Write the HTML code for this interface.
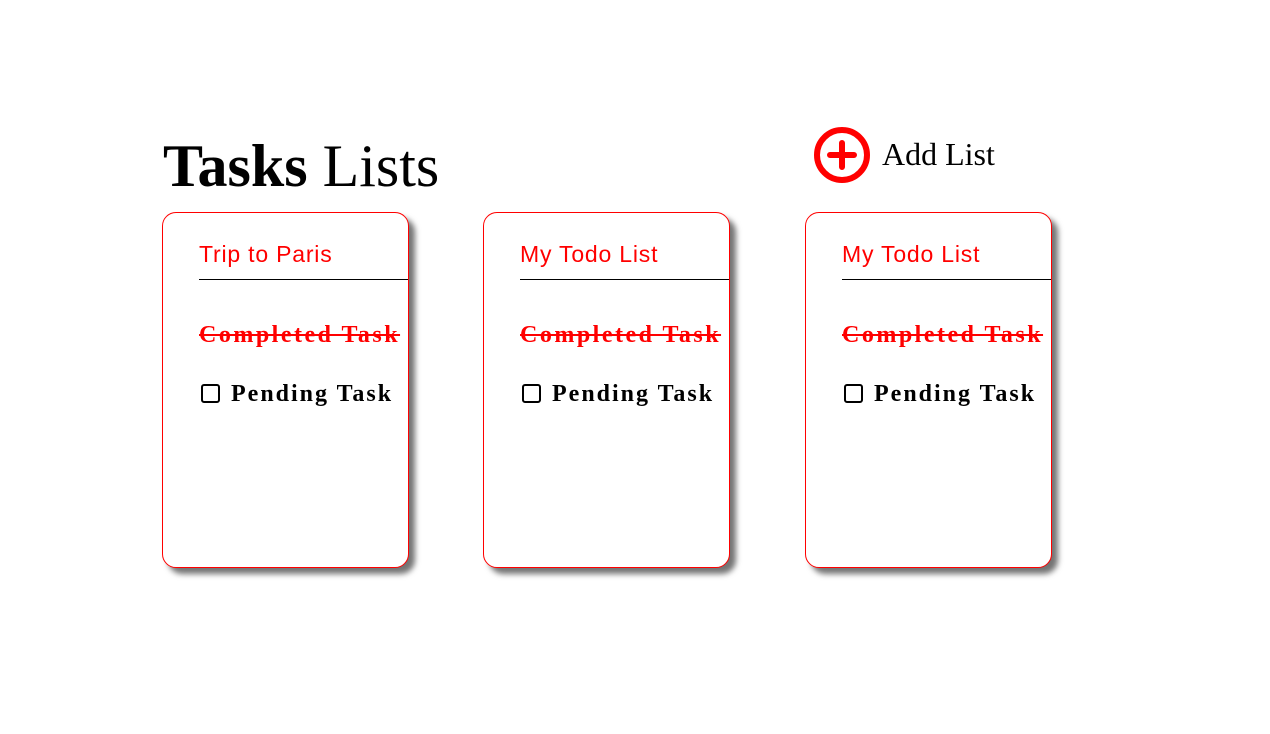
<!DOCTYPE html>
<html><head><style>
body{margin:0;width:1270px;height:734px;background:#fff;position:relative;overflow:hidden;font-family:"Liberation Serif",serif}
.h{position:absolute;left:163px;top:126px;font-size:60px;line-height:80px;white-space:nowrap}
.add{position:absolute;left:813px;top:127px}
.addt{position:absolute;left:882px;top:134px;font-size:32px;line-height:40px}
.card{position:absolute;top:212px;width:245px;height:354px;border:1px solid #f00;border-radius:14px;box-shadow:6px 6px 6px rgba(0,0,0,.55);background:#fff;overflow:hidden}
.t{position:absolute;left:36px;top:28px;font-family:"Liberation Sans",sans-serif;font-size:23px;color:#f00;letter-spacing:0.8px;white-space:nowrap}
.line{position:absolute;left:36px;right:0;top:66px;border-top:1px solid #000}
.c{position:absolute;left:36px;top:109px;font-weight:bold;font-size:24px;color:#f00;text-decoration:line-through;letter-spacing:2.5px;white-space:nowrap}
.p{position:absolute;left:68px;top:168px;font-weight:bold;font-size:24px;letter-spacing:2px;white-space:nowrap}
.cb{position:absolute;left:38px;top:171px;width:15px;height:15px;border:2.5px solid #000;border-radius:3px}
</style></head><body>
<div class="h"><b>Tasks</b> Lists</div>
<svg class="add" width="58" height="58" viewBox="0 0 58 58"><circle cx="29" cy="28" r="25" fill="none" stroke="#f00" stroke-width="6"/><path d="M29 16V40M17 28H41" stroke="#f00" stroke-width="6" stroke-linecap="round"/></svg>
<div class="addt">Add List</div>
<div class="card" style="left:162px"><div class="t">Trip to Paris</div><div class="line"></div><div class="c">Completed Task</div><div class="cb"></div><div class="p">Pending Task</div></div>
<div class="card" style="left:483px"><div class="t">My Todo List</div><div class="line"></div><div class="c">Completed Task</div><div class="cb"></div><div class="p">Pending Task</div></div>
<div class="card" style="left:805px"><div class="t">My Todo List</div><div class="line"></div><div class="c">Completed Task</div><div class="cb"></div><div class="p">Pending Task</div></div>
</body></html>
